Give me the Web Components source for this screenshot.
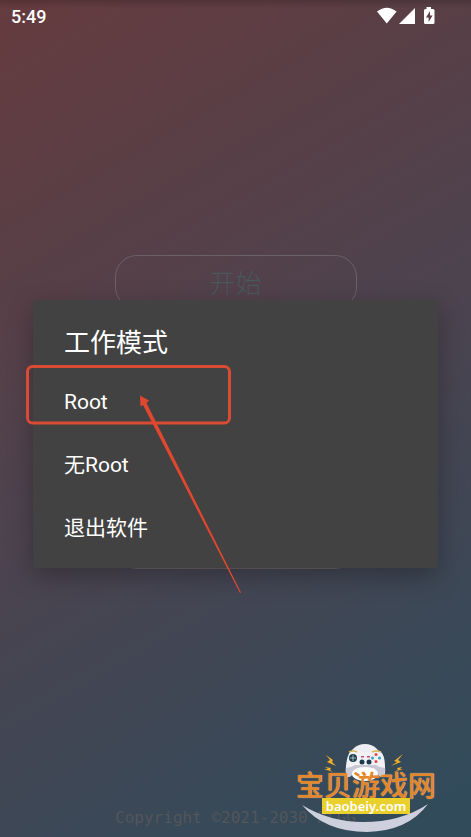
<!DOCTYPE html>
<html lang="zh-CN">
<head>
<meta charset="utf-8">
<meta name="viewport" content="width=device-width, initial-scale=1">
<title>工作模式</title>
<style>
    html, body {
        margin: 0;
        height: 100%;
    }
    body {
        font-family: Roboto, "Noto Sans CJK SC", sans-serif;
        color: #fff;
    }
</style>
</head>
<body>
<app-screen>
    <status-bar slot="status" time="5:49"></status-bar>
    <start-panel label="开始"></start-panel>
    <mode-dialog slot="overlay" heading="工作模式">
        <mode-option>Root</mode-option>
        <mode-option>无Root</mode-option>
        <mode-option>退出软件</mode-option>
    </mode-dialog>
    <span slot="footer">Copyright ©2021-2030 RLGG</span>
    <site-mark slot="overlay" name="宝贝游戏网" domain="baobeiy.com"></site-mark>
</app-screen>

<script>
class AppScreen extends HTMLElement {
    constructor() {
        super();
        this.attachShadow({ mode: 'open' }).innerHTML = `
            <style>
                :host {
                    display: flex;
                    flex-direction: column;
                    position: relative;
                    min-height: 100%;
                    overflow: hidden;
                    background: linear-gradient(150deg, #653b3e 0%, #4c434f 50%, #324b5b 95%);
                }
                main {
                    flex: 1;
                    display: flex;
                    flex-direction: column;
                    align-items: center;
                    justify-content: center;
                    padding-bottom: 14px;
                }
                footer {
                    padding: 0 0 7px;
                    text-align: center;
                    font: 16px/24px "DejaVu Sans Mono", monospace;
                    color: #53565a;
                }
            </style>
            <slot name="status"></slot>
            <main><slot></slot></main>
            <footer><slot name="footer"></slot></footer>
            <slot name="overlay"></slot>
        `;
    }
}

class StatusBar extends HTMLElement {
    constructor() {
        super();
        this.attachShadow({ mode: 'open' });
    }

    connectedCallback() {
        this.shadowRoot.innerHTML = `
            <style>
                :host {
                    display: flex;
                    align-items: center;
                    justify-content: space-between;
                    height: 32px;
                    padding: 0 36px 0 11px;
                    font-size: 18px;
                    font-weight: 500;
                    background: linear-gradient(rgba(0,0,0,0.16), rgba(0,0,0,0) 8px);
                }
                svg {
                    display: block;
                    fill: #fff;
                }
            </style>
            <time>${this.getAttribute('time')}</time>
            <svg width="58" height="18" viewBox="0 0 58 18" role="img" aria-label="Wi-Fi, signal, charging">
                <path d="M0 4.6Q9.8-3 19.6 4.6L9.8 16.6Z"/>
                <path d="M22 17H38V1Z"/>
                <path fill-rule="evenodd" d="M49.500 0H54V2H56Q57.500 2 57.500 3.500V15.500Q57.500 17 56 17H48.500Q47 17 47 15.500V3.500Q47 2 48.500 2H49.500ZM53 4L49 10.500H51.600V15L55.600 8.500H53Z"/>
            </svg>
        `;
    }
}

class StartPanel extends HTMLElement {
    constructor() {
        super();
        this.attachShadow({ mode: 'open' });
    }

    connectedCallback() {
        this.shadowRoot.innerHTML = `
            <style>
                :host {
                    display: flex;
                    flex-direction: column;
                    gap: 12px;
                    width: 242px;
                }
                button, .info {
                    box-sizing: border-box;
                    border: 1px solid #6a6266;
                    border-radius: 22px;
                    background: none;
                }
                button {
                    height: 54px;
                    padding: 0;
                    font: 300 26px/52px "Noto Sans CJK SC", sans-serif;
                    color: #48585b;
                }
                .info {
                    height: 248px;
                }
            </style>
            <button type="button">${this.getAttribute('label')}</button>
            <div class="info"></div>
        `;
    }
}

class ModeOption extends HTMLElement {
    constructor() {
        super();
        this.attachShadow({ mode: 'open' }).innerHTML = `
            <style>
                :host {
                    display: block;
                }
                button {
                    display: block;
                    width: 100%;
                    padding: 0 31px;
                    border: 0;
                    background: none;
                    color: #fff;
                    font: inherit;
                    font-size: 21px;
                    line-height: 63px;
                    text-align: left;
                }
            </style>
            <button type="button"><slot></slot></button>
        `;
    }
}

class ModeDialog extends HTMLElement {
    constructor() {
        super();
        this.attachShadow({ mode: 'open' });
    }

    connectedCallback() {
        this.shadowRoot.innerHTML = `
            <style>
                :host {
                    position: absolute;
                    inset: 31px 0 0;
                    display: grid;
                    place-items: center;
                }
                section {
                    position: relative;
                    box-sizing: border-box;
                    width: 86%;
                    padding: 23px 0 8px;
                    border-radius: 3px;
                    background: #424242;
                    box-shadow: 0 8px 26px rgba(0,0,0,0.28);
                }
                h1 {
                    margin: 0;
                    padding: 0 31px 8px;
                    font-size: 26px;
                    font-weight: 400;
                    line-height: 40px;
                }
                /* hand-drawn callout lying over the first option */
                svg {
                    position: absolute;
                    top: 64px;
                    left: -8px;
                    pointer-events: none;
                    overflow: visible;
                }
            </style>
            <section role="dialog" aria-labelledby="title">
                <h1 id="title">${this.getAttribute('heading')}</h1>
                <slot></slot>
                <svg width="220" height="232" viewBox="0 0 220 232" aria-hidden="true">
                    <rect x="2.500" y="2.500" width="202" height="56.500" rx="5" fill="none" stroke="#d94b33" stroke-width="3"/>
                    <path fill="#e0472f" d="M115 31.500L124 36.500L121.500 39L216 228.500L215 229L118 41L115.500 42.500Z"/>
                </svg>
            </section>
        `;
    }
}

class SiteMark extends HTMLElement {
    constructor() {
        super();
        this.attachShadow({ mode: 'open' });
    }

    connectedCallback() {
        this.shadowRoot.innerHTML = `
            <style>
                :host {
                    position: absolute;
                    right: 35px;
                    bottom: 4px;
                    display: grid;
                    justify-items: center;
                    width: 140px;
                    height: 90px;
                }
                svg {
                    grid-area: 1 / 1;
                }
                .words {
                    grid-area: 1 / 1;
                    position: relative;
                    display: flex;
                    flex-direction: column;
                    align-items: center;
                    padding-top: 27px;
                }
                strong {
                    font: 500 28px/28px "Noto Sans CJK SC", sans-serif;
                    white-space: nowrap;
                    color: #e5862a;
                    text-shadow: 0 0 1px #f6d3a2;
                }
                a {
                    padding: 0 4px;
                    background: #ead02d;
                    color: #fff;
                    font: 600 13px/16px "Noto Sans", sans-serif;
                    text-decoration: none;
                }
            </style>
            <svg width="140" height="90" viewBox="0 0 140 90" aria-hidden="true">
                <ellipse cx="69" cy="18" rx="17" ry="17" fill="#ececf1"/>
                <path fill="#f2f2f6" d="M54 9Q61 6 66 9H73Q79 6 85 9Q89 13 89 24Q90 33 86 34Q83 34 79 25H60Q55 35 52 34Q49 32 50 23Q51 13 54 9Z"/>
                <path fill="#c8c8d5" d="M50 25Q55 25 59 22H80Q84 25 89 25Q89 34 86 34Q83 34 78 25H61Q55 35 52 34Q49 32 50 25Z"/>
                <ellipse cx="69" cy="31" rx="13" ry="7" fill="#fff"/>
                <path stroke="#d9b756" stroke-width="1.500" fill="none" d="M53 9Q57 7 61 9M76 9Q81 7 85 9"/>
                <circle cx="57" cy="15" r="4" fill="#1b4052"/>
                <path stroke="#fff" d="M57 12V18M54 15H60" stroke-width=".6"/>
                <circle cx="66" cy="19" r="2.500" fill="#183b50"/>
                <circle cx="73" cy="19" r="2.500" fill="#183b50"/>
                <path fill="#ce4967" d="M65 13H68V14.500H65ZM71 13H74V14.500H71Z"/>
                <circle cx="80" cy="11.500" r="1.500" fill="#e1474d"/>
                <circle cx="80" cy="18.500" r="1.500" fill="#e1474d"/>
                <circle cx="76.500" cy="15" r="1.500" fill="#30a8ba"/>
                <circle cx="83.500" cy="15" r="1.500" fill="#30a8ba"/>
                <g fill="#f0ae28">
                    <path d="M30 12L37 17L36 19L40 23L31 19L34 17Z"/>
                    <path d="M29 24L35 25L34 27L37 29L28 26H32Z"/>
                    <path d="M107 11L98 18L101 19L95 23L105 19L102 17Z"/>
                    <path d="M106 24L101 25L102 27L98 29L107 26H104Z"/>
                </g>
                <path fill="#cfd0de" d="M6 62Q34 79 67 79Q105 79 132 61Q112 88 71 89Q29 89 6 62Z"/>
            </svg>
            <div class="words">
                <strong>${this.getAttribute('name')}</strong>
                <a href="#">${this.getAttribute('domain')}</a>
            </div>
        `;
    }
}

customElements.define('app-screen', AppScreen);
customElements.define('status-bar', StatusBar);
customElements.define('start-panel', StartPanel);
customElements.define('mode-option', ModeOption);
customElements.define('mode-dialog', ModeDialog);
customElements.define('site-mark', SiteMark);
</script>
</body>
</html>
